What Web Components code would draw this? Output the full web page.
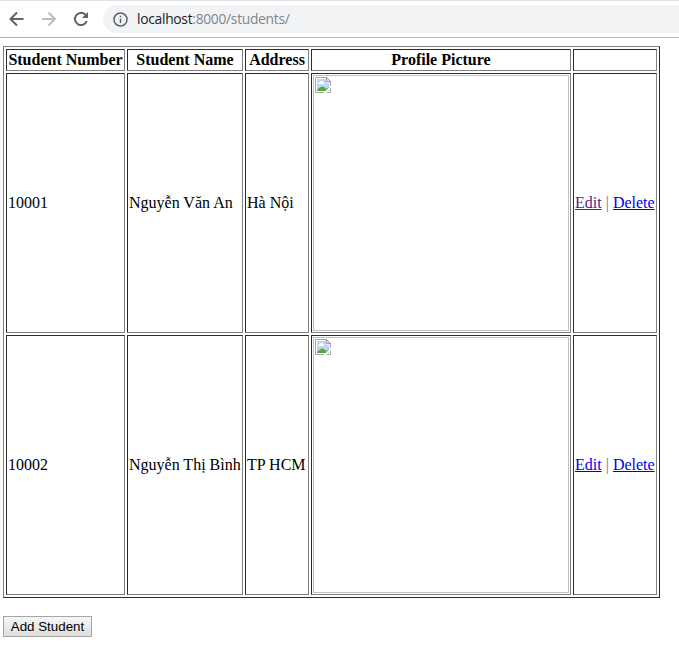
<!DOCTYPE html>
<html lang="vi">
<head>
<meta charset="utf-8">
<title>Students</title>
<style>
body{margin:0;background:#fff;color:#000;font:16px/18px "Liberation Serif",serif}
</style>
</head>
<body>
<browser-toolbar><span slot="host">localhost</span><span slot="path">:8000/students/</span></browser-toolbar>
<student-page></student-page>
<script>
function define(name, html) {
  const t = document.createElement('template');
  t.innerHTML = html;
  customElements.define(name, class extends HTMLElement {
    constructor() {
      super();
      this.attachShadow({mode: 'open'}).append(t.content.cloneNode(true));
    }
  });
}

define('browser-toolbar', `
<style>
:host{display:flex;box-sizing:border-box;height:38px;padding:4px 0 4px 8px;border-top:1px solid #dee1e6;border-bottom:1px solid #b4b5b6;background:#fff}
svg{display:block;flex:none}
.nav{display:flex;gap:14px;width:95px;padding-top:5px}
.box{display:flex;flex:1;height:28px;background:#f1f3f4;border-radius:14px 0 0 14px;padding-left:10px;align-items:center}
.url{margin-left:9px;display:flex;font:13.8px/20px "Open Sans",sans-serif;letter-spacing:-.28px;white-space:pre}
.h{color:#202124}.p{color:#80868b}
</style>
<div class="nav">
<svg width="18" height="18" viewBox="0 0 18 18" fill="none" stroke="#5f6368" stroke-width="2"><path d="M15.500 9H3M9 2.500 2.500 9 9 15.500"/></svg>
<svg width="18" height="18" viewBox="0 0 18 18" fill="none" stroke="#babcbe" stroke-width="2"><path d="M2 9h12.500M8.500 2.500 15 9l-6.500 6.500"/></svg>
<svg width="18" height="18" viewBox="0 0 18 18" fill="none" stroke="#5f6368" stroke-width="2"><path d="M14.800 11A6.100 6.100 0 1 1 13.400 4.700"/><path d="M16 2v6h-6z" fill="#5f6368" stroke="none"/></svg>
</div>
<div class="box">
<svg width="15" height="15" viewBox="0 0 15 15" fill="none" stroke="#5f6368" stroke-width="1.500"><circle cx="7.500" cy="7.500" r="6.500"/><path d="M7.500 6.500v4.500M7.500 3.800v1.500"/></svg>
<div class="url"><span class="h"><slot name="host"></slot></span><span class="p"><slot name="path"></slot></span></div>
</div>`);

define('table-cell', `
<style>
:host{display:flex;align-items:center;box-sizing:border-box;border:1px solid;border-color:#2c2c2c #808080 #808080 #2c2c2c;padding:1px;white-space:nowrap}
:host([head]){justify-content:center;font-weight:bold}
</style><slot></slot>`);

define('missing-picture', `
<style>
:host{display:block;box-sizing:border-box;width:256px;height:256px;border:1px solid #c0c0c0;padding:1px}
svg{display:block}
</style>
<svg width="16" height="16" viewBox="0 0 16 16">
<path d="M.5.5h11l4 4v11H.5z" fill="#fff" stroke="#a5a5a5"/>
<path d="M2 2h9v3.500h3V14H2z" fill="#c3d5f6"/>
<path d="M3 7q0-1.500 1.500-1.500Q5 4 6.500 4T8.500 5.500Q9.500 5.500 9.500 7z" fill="#fff"/>
<path d="M2 14v-1Q5 9.500 7.500 9.500T11 12l3-2v4z" fill="#51ad38"/>
<path d="M16 8.500 8.500 16H11l5-5z" fill="#fff"/>
<path d="M11.500.5v4h4z" fill="#eee" stroke="#999"/>
</svg>`);

define('row-actions', `
<style>
:host{display:block}
a{color:#0000ee;text-decoration:underline}
:host([visited]) a:first-of-type{color:#551a8b}
i{font-style:normal;color:#777}
</style><a href="#edit">Edit</a> <i>|</i> <a href="#delete">Delete</a>`);

define('student-table', `
<style>
:host{display:grid;box-sizing:border-box;width:657px;grid-template-columns:119px 116px 64px 260px 84px;grid-template-rows:22px 260px 260px;gap:2px;padding:2px;border:1px solid;border-color:#808080 #2c2c2c #2c2c2c #808080}
</style><slot></slot>`);

define('push-button', `
<style>
:host{display:block}
button{display:block;box-sizing:border-box;width:89px;height:21px;margin:0;padding:0;border:1px solid #a6a6a6;border-radius:0;background:linear-gradient(#f6f6f6,#dedede);color:#000;font:13.330px/18px "Liberation Sans",sans-serif;white-space:nowrap}
</style><button><slot></slot></button>`);

define('student-page', `
<style>:host{display:flex;flex-direction:column;align-items:flex-start;gap:18px;padding:8px 0 0 3px}</style>
<student-table>
<table-cell head>Student Number</table-cell><table-cell head>Student Name</table-cell><table-cell head>Address</table-cell><table-cell head>Profile Picture</table-cell><table-cell head></table-cell>
<table-cell>10001</table-cell><table-cell>Nguyễn Văn An</table-cell><table-cell>Hà Nội</table-cell><table-cell><missing-picture></missing-picture></table-cell><table-cell><row-actions visited></row-actions></table-cell>
<table-cell>10002</table-cell><table-cell>Nguyễn Thị Bình</table-cell><table-cell>TP HCM</table-cell><table-cell><missing-picture></missing-picture></table-cell><table-cell><row-actions></row-actions></table-cell>
</student-table>
<push-button>Add Student</push-button>`);
</script>
</body>
</html>
